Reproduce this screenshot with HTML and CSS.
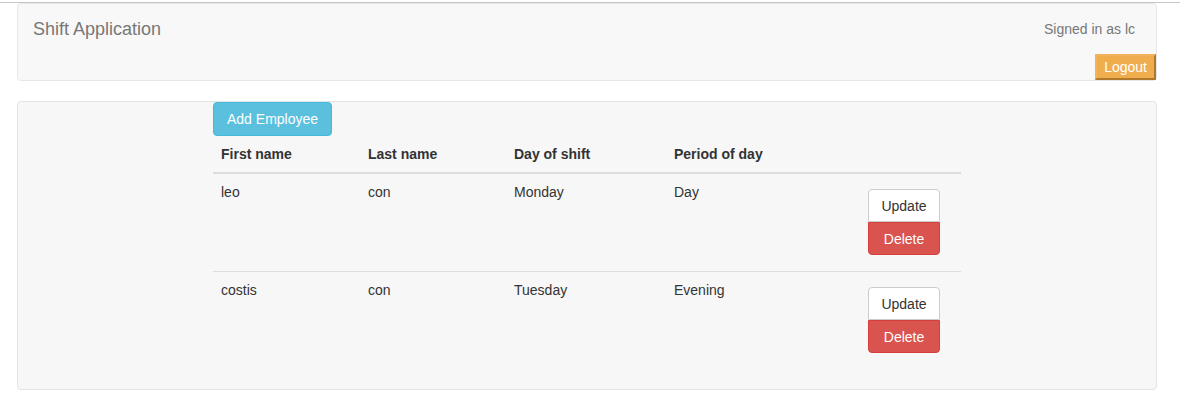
FILE: index.html
```html
<!DOCTYPE html>
<html>
<head>
<meta charset="utf-8">
<title>Shift Application</title>
<link rel="stylesheet" href="styles.css">
</head>
<body>
<div class="topline"></div>
<nav class="navbar">
  <div class="nav-row">
    <span class="brand">Shift Application</span>
    <span class="signed">Signed in as lc</span>
  </div>
  <div class="nav-row2">
    <button class="logout">Logout</button>
  </div>
</nav>
<section class="panel">
  <div class="inner">
    <button class="btn btn-info">Add Employee</button>
    <table class="table">
      <thead>
        <tr>
          <th class="c1">First name</th>
          <th class="c2">Last name</th>
          <th class="c3">Day of shift</th>
          <th class="c4">Period of day</th>
          <th class="c5"></th>
        </tr>
      </thead>
      <tbody>
        <tr>
          <td>leo</td>
          <td>con</td>
          <td>Monday</td>
          <td>Day</td>
          <td>
            <div class="btn-group">
              <button class="btn btn-default">Update</button>
              <button class="btn btn-danger">Delete</button>
            </div>
          </td>
        </tr>
        <tr>
          <td>costis</td>
          <td>con</td>
          <td>Tuesday</td>
          <td>Evening</td>
          <td>
            <div class="btn-group">
              <button class="btn btn-default">Update</button>
              <button class="btn btn-danger">Delete</button>
            </div>
          </td>
        </tr>
      </tbody>
    </table>
  </div>
</section>
</body>
</html>
```
FILE: styles.css
```css
* { box-sizing: border-box; }
html, body { margin: 0; padding: 0; background: #fff; }
body {
  font-family: "Liberation Sans", Arial, sans-serif;
  font-size: 14px;
  line-height: 20px;
  color: #333;
}
.topline {
  margin-top: 2px;
  height: 1px;
  background: #c6c6c6;
}
.navbar {
  margin-left: 17px;
  width: 1140px;
  background: #f8f8f8;
  border: 1px solid #e7e7e7;
  border-radius: 4px;
  display: flex;
  flex-direction: column;
}
.nav-row {
  height: 50px;
  display: flex;
  justify-content: space-between;
  align-items: flex-start;
}
.brand {
  padding: 15px 15px;
  font-size: 18px;
  line-height: 20px;
  color: #777;
}
.signed {
  margin: 15px 21px 0 0;
  color: #777;
}
.nav-row2 {
  display: flex;
  justify-content: flex-end;
}
.logout {
  font-family: "Liberation Sans", Arial, sans-serif;
  font-size: 14px;
  line-height: 20px;
  height: 26px;
  padding: 1px 7px;
  background: #f0ad4e;
  color: #fff;
  border: 2px solid #e8a040;
  border-top-color: #f2b35c;
  border-left-color: #f2b35c;
  border-right-color: #b0782c;
  border-bottom-color: #b0782c;
  border-radius: 0;
}
.panel {
  margin: 20px 0 0 17px;
  width: 1140px;
  background: #f7f7f7;
  border: 1px solid #e3e3e3;
  border-radius: 4px;
}
.inner {
  width: 748px;
  margin: 0 auto;
}
.btn {
  font-family: "Liberation Sans", Arial, sans-serif;
  font-size: 14px;
  line-height: 20px;
  padding: 6px 12px;
  border: 1px solid transparent;
  border-radius: 4px;
  cursor: pointer;
  display: block;
}
.btn-info {
  background: #5bc0de;
  border-color: #46b8da;
  color: #fff;
  height: 34px;
  padding: 6px 13px;
  margin: 0;
}
.table {
  width: 748px;
  border-collapse: collapse;
  margin: 0 0 20px;
}
.table th, .table td {
  padding: 8px;
  text-align: left;
  vertical-align: top;
  line-height: 20px;
}
.table th {
  font-weight: bold;
  border-bottom: 2px solid #ddd;
}
.table tbody tr + tr td {
  border-top: 1px solid #ddd;
}
.c1 { width: 147px; }
.c2 { width: 146px; }
.c3 { width: 160px; }
.c4 { width: 194px; }
.c5 { width: 101px; }
.btn-group {
  display: flex;
  flex-direction: column;
  width: 72px;
  margin: 7px 0 8px;
}
.btn-group .btn {
  width: 72px;
  height: 33px;
  padding: 6px 0;
  text-align: center;
}
.btn-default {
  background: #fff;
  border-color: #ccc;
  color: #333;
  border-radius: 4px 4px 0 0;
}
.btn-danger {
  background: #d9534f;
  border-color: #d43f3a;
  color: #fff;
  border-radius: 0 0 4px 4px;
}
```
